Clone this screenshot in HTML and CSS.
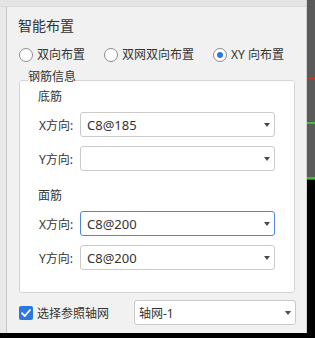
FILE: index.html
```html
<!DOCTYPE html>
<html lang="zh-CN">
<head>
    <meta charset="UTF-8">
    <meta name="viewport" content="width=device-width, initial-scale=1.0">
    <title>智能布置</title>
    <link rel="stylesheet" href="styles.css">
</head>
<body>
    <div class="screen">
        <div class="dialog">
            <div class="dialog-top"></div>
            <div class="dialog-body">
                <div class="edge"></div>
                <div class="content">
                    <div class="title">智能布置</div>

                    <div class="radios">
                        <label class="radio"><span class="circle"></span>双向布置</label>
                        <label class="radio"><span class="circle"></span>双网双向布置</label>
                        <label class="radio"><span class="circle checked"></span>XY 向布置</label>
                    </div>

                    <fieldset class="group">
                        <legend>钢筋信息</legend>

                        <div class="section">底筋</div>
                        <div class="row">
                            <span class="label">X方向:</span>
                            <div class="select"><span>C8@185</span><span class="arrow"></span></div>
                        </div>
                        <div class="row second">
                            <span class="label">Y方向:</span>
                            <div class="select"><span></span><span class="arrow"></span></div>
                        </div>

                        <div class="section top">面筋</div>
                        <div class="row">
                            <span class="label">X方向:</span>
                            <div class="select focused"><span>C8@200</span><span class="arrow"></span></div>
                        </div>
                        <div class="row second">
                            <span class="label">Y方向:</span>
                            <div class="select"><span>C8@200</span><span class="arrow"></span></div>
                        </div>
                    </fieldset>

                    <div class="footer">
                        <label class="check">
                            <span class="box">
                                <svg width="14" height="14" viewBox="0 0 14 14">
                                    <path d="M3 7.2 L5.8 10 L11 4" fill="none" stroke="#fff" stroke-width="1.8" stroke-linecap="round" stroke-linejoin="round"/>
                                </svg>
                            </span>
                            选择参照轴网
                        </label>
                        <div class="select wide"><span>轴网-1</span><span class="arrow"></span></div>
                    </div>
                </div>
            </div>
        </div>
        <div class="side"></div>
    </div>
</body>
</html>
```

FILE: styles.css
```css
body {
    margin: 0;
    background-color: #000;
    font-family: "Noto Sans", "Noto Sans CJK SC", sans-serif;
    font-size: 12px;
    color: #333;
}

.screen {
    display: flex;
    width: 315px;
    height: 338px;
}

.dialog {
    width: 307px;
    height: 333px;
    box-sizing: border-box;
    background-color: #f0f1f0;
    border-right: 1px solid #d2d2d2;
    display: flex;
    flex-direction: column;
}

.dialog-top {
    height: 6px;
    background-color: #e4e4e4;
    border-bottom: 1px solid #dadada;
}

.dialog-body {
    flex: 1;
    display: flex;
}

.edge {
    width: 6px;
    background-color: #e9e9e9;
    border-right: 1px solid #c8c8c8;
}

.content {
    flex: 1;
    padding: 9px 0 0 11px;
}

.title {
    font-size: 14px;
    line-height: 20px;
}

/* radio buttons */
.radios {
    display: flex;
    gap: 19px;
    margin: 11px 0 0 1px;
    line-height: 16px;
}

.radio {
    display: flex;
    align-items: center;
    gap: 4px;
}

.circle {
    width: 14px;
    height: 14px;
    box-sizing: border-box;
    border: 1px solid #8c8c8c;
    border-radius: 50%;
    background-color: #fff;
    display: flex;
    align-items: center;
    justify-content: center;
}

.circle.checked::after {
    content: "";
    width: 6px;
    height: 6px;
    border-radius: 50%;
    background-color: #2b78e4;
}

/* group box */
.group {
    width: 276px;
    box-sizing: border-box;
    margin: 7px 0 0 1px;
    padding: 0 18px 22px 18px;
    border: 1px solid #d4d4d4;
    border-radius: 3px;
    background-color: #fff;
}

.group legend {
    padding: 0 0 6px 0;
    margin-left: -10px;
    line-height: 14px;
}

.section {
    line-height: 14px;
}

.section.top {
    margin-top: 18px;
}

.row {
    display: flex;
    align-items: center;
    margin-top: 8px;
}

.row.second {
    margin-top: 9px;
}

.label {
    width: 41px;
    margin-left: 1px;
}

.select {
    width: 195px;
    height: 25px;
    box-sizing: border-box;
    border: 1px solid #cacaca;
    border-radius: 3px;
    background-color: #fff;
    display: flex;
    align-items: center;
    justify-content: space-between;
    padding: 0 4px 0 6px;
    font-size: 13px;
}

.select.focused {
    border-color: #4f86dc;
}

.arrow {
    width: 0;
    height: 0;
    border-left: 3px solid transparent;
    border-right: 3px solid transparent;
    border-top: 4px solid #4a4a4a;
}

/* bottom row */
.footer {
    display: flex;
    align-items: center;
    justify-content: space-between;
    width: 277px;
    margin: 7px 0 0 1px;
}

.check {
    display: flex;
    align-items: center;
    gap: 4px;
}

.box {
    width: 14px;
    height: 14px;
    border-radius: 2px;
    background-color: #2b78e4;
    display: flex;
}

.select.wide {
    width: 162px;
    padding-left: 4px;
    font-size: 12px;
}

.side {
    width: 8px;
    height: 180px;
    background: linear-gradient(to bottom,
        #5a5a5a 0, #5a5a5a 78px,
        #c43a2f 78px, #c43a2f 79px,
        #5a5a5a 79px, #5a5a5a 122px,
        #2fc82f 122px, #2fc82f 124px,
        #5a5a5a 124px, #5a5a5a 177px,
        #2fc82f 177px, #2fc82f 179px,
        #5a5a5a 179px);
}
```
